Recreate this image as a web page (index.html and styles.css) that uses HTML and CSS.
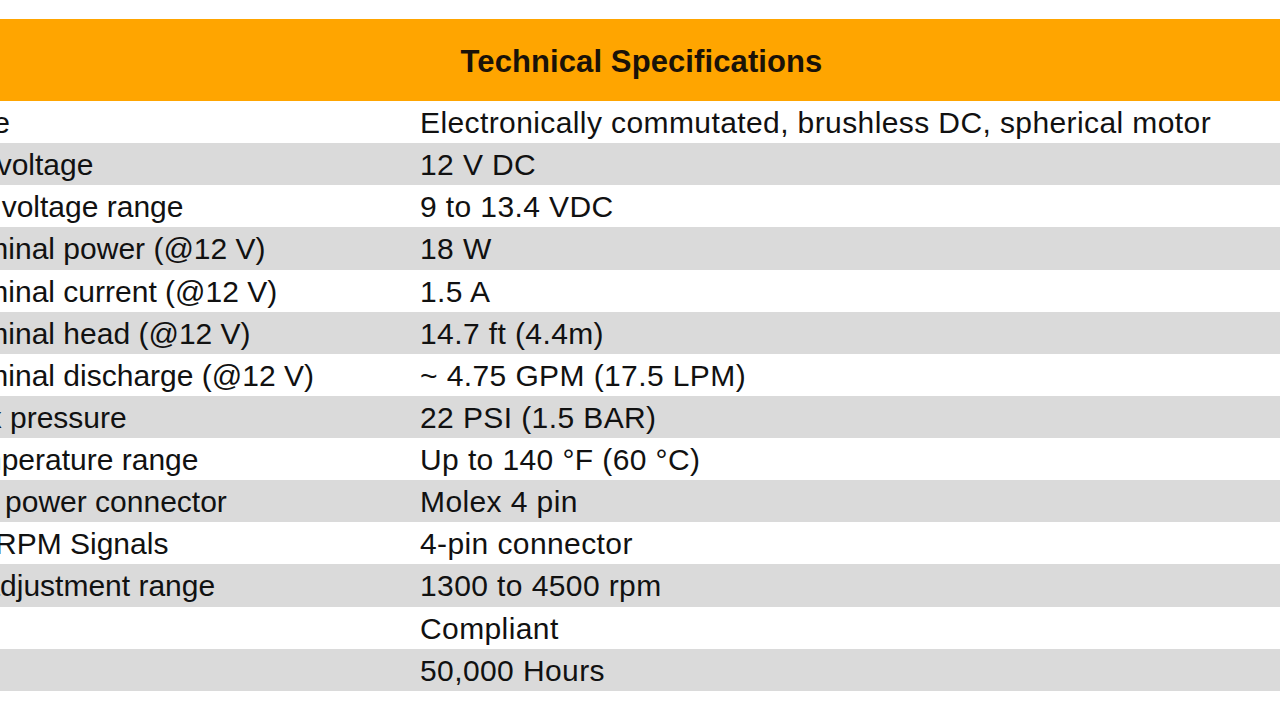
FILE: index.html
```html
<!DOCTYPE html>
<html lang="en">
<head>
<meta charset="utf-8">
<title>Technical Specifications</title>
<link rel="stylesheet" href="styles.css">
</head>
<body>
<div class="page">
  <table class="specs">
    <colgroup>
      <col class="col-label">
      <col class="col-value">
    </colgroup>
    <thead>
      <tr><th colspan="2">Technical Specifications</th></tr>
    </thead>
    <tbody>
      <tr><td class="label">Type</td><td class="value">Electronically commutated, brushless DC, spherical motor</td></tr>
      <tr><td class="label">DC voltage</td><td class="value">12 V DC</td></tr>
      <tr><td class="label">Op. voltage range</td><td class="value">9 to 13.4 VDC</td></tr>
      <tr><td class="label">Nominal power (@12 V)</td><td class="value">18 W</td></tr>
      <tr><td class="label">Nominal current (@12 V)</td><td class="value">1.5 A</td></tr>
      <tr><td class="label">Nominal head (@12 V)</td><td class="value">14.7 ft (4.4m)</td></tr>
      <tr><td class="label">Nominal discharge (@12 V)</td><td class="value">~ 4.75 GPM (17.5 LPM)</td></tr>
      <tr><td class="label">Max pressure</td><td class="value">22 PSI (1.5 BAR)</td></tr>
      <tr><td class="label">Temperature range</td><td class="value">Up to 140 °F (60 °C)</td></tr>
      <tr><td class="label">Aux power connector</td><td class="value">Molex 4 pin</td></tr>
      <tr><td class="label">FG/RPM Signals</td><td class="value">4-pin connector</td></tr>
      <tr><td class="label">Readjustment range</td><td class="value">1300 to 4500 rpm</td></tr>
      <tr><td class="label"></td><td class="value">Compliant</td></tr>
      <tr><td class="label"></td><td class="value">50,000 Hours</td></tr>
    </tbody>
  </table>
</div>
</body>
</html>
```

FILE: styles.css
```css
html, body {
  margin: 0;
  padding: 0;
  background: #ffffff;
  overflow: hidden;
}

.page {
  padding-top: 19px;
  width: 1280px;
  height: 722px;
  box-sizing: border-box;
  overflow: hidden;
}

.specs {
  margin-left: -59px;
  width: 1401px;
  border-collapse: collapse;
  border-spacing: 0;
  table-layout: fixed;
  font-family: "Liberation Sans", Arial, sans-serif;
  color: #111111;
}

.col-label {
  width: 475px;
}

.col-value {
  width: 926px;
}

.specs th {
  height: 82px;
  padding: 4px 0 0;
  box-sizing: border-box;
  background: #ffa500;
  font-size: 31px;
  font-weight: bold;
  letter-spacing: 0.1px;
  text-align: center;
  vertical-align: middle;
  color: #1a1208;
}

.specs td {
  height: 42.14px;
  padding: 2px 4px 0;
  font-size: 30px;
  line-height: 34px;
  vertical-align: middle;
  white-space: nowrap;
  text-align: left;
  box-sizing: border-box;
}

.specs .label {
  letter-spacing: 0;
}

.specs .value {
  letter-spacing: 0.4px;
}

.specs tbody tr:nth-child(even) td {
  background: #dadada;
}

.specs tbody tr:nth-child(odd) td {
  background: #ffffff;
}
```
